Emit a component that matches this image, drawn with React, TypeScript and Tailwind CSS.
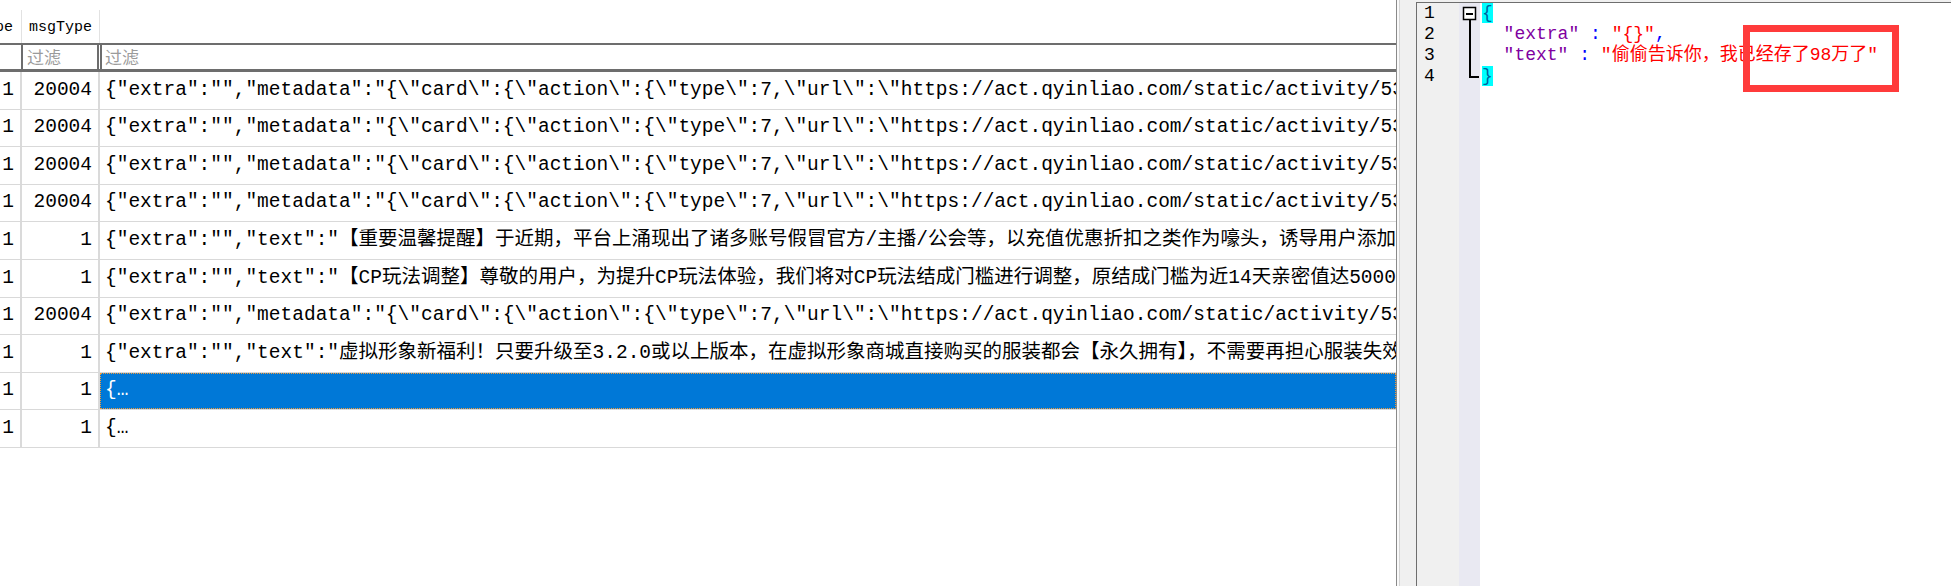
import React from 'react';

const MONO = { fontFamily: '"Liberation Mono", "Noto Sans CJK SC", monospace' };

const META =
  '{"extra":"","metadata":"{\\"card\\":{\\"action\\":{\\"type\\":7,\\"url\\":\\"https://act.qyinliao.com/static/activity/53e1f0a2b7c4/index.html\\"}}}"}';

interface Row {
  a: string;
  b: string;
  c: string;
  selected?: boolean;
}

const rows: Row[] = [
  { a: '1', b: '20004', c: META },
  { a: '1', b: '20004', c: META },
  { a: '1', b: '20004', c: META },
  { a: '1', b: '20004', c: META },
  {
    a: '1',
    b: '1',
    c: '{"extra":"","text":"【重要温馨提醒】于近期，平台上涌现出了诸多账号假冒官方/主播/公会等，以充值优惠折扣之类作为嚎头，诱导用户添加私人联系方式"}',
  },
  {
    a: '1',
    b: '1',
    c: '{"extra":"","text":"【CP玩法调整】尊敬的用户，为提升CP玩法体验，我们将对CP玩法结成门槛进行调整，原结成门槛为近14天亲密值达5000"}',
  },
  { a: '1', b: '20004', c: META },
  {
    a: '1',
    b: '1',
    c: '{"extra":"","text":"虚拟形象新福利！只要升级至3.2.0或以上版本，在虚拟形象商城直接购买的服装都会【永久拥有】，不需要再担心服装失效啦"}',
  },
  { a: '1', b: '1', c: '{…', selected: true },
  { a: '1', b: '1', c: '{…' },
];

const GridRow = ({ row }: { row: Row }) => (
  <div className="flex h-[37.6px] border-b border-[#d9d9d9] text-[19.5px] text-black" style={MONO}>
    <div className="flex w-[22px] shrink-0 items-center justify-end border-r-2 border-[#dadada] pr-[6px]">{row.a}</div>
    <div className="flex w-[78px] shrink-0 items-center justify-end border-r-2 border-[#dadada] pr-[6px]">{row.b}</div>
    <div
      className={
        row.selected
          ? 'flex min-w-0 flex-1 items-center overflow-hidden whitespace-nowrap border border-dotted border-[#f29a3a] bg-[#0078d7] pl-[4px] text-white'
          : 'flex min-w-0 flex-1 items-center overflow-hidden whitespace-nowrap pl-[5px]'
      }
    >
      {row.c}
    </div>
  </div>
);

const DataGrid = () => (
  <div className="flex h-full w-[1397px] shrink-0 flex-col border-r border-[#8a8a8a] bg-white">
    <div className="h-[10px]" />
    <div className="flex h-[33px] text-[15px] text-black" style={MONO}>
      <div className="flex w-[22px] shrink-0 items-center justify-end overflow-hidden border-r border-[#e2e2e2] pt-[3px] pr-[8px]">
        pe
      </div>
      <div className="flex w-[78px] shrink-0 items-center border-r border-[#e2e2e2] pt-[3px] pl-[7px]">msgType</div>
      <div className="flex-1" />
    </div>
    <div
      className="flex h-[29px] border-t-2 border-b-[3px] border-[#6d6d6d] text-[17px] text-[#9b9b9b]"
      style={{ fontFamily: '"Noto Sans CJK SC", sans-serif' }}
    >
      <div className="w-[21px] shrink-0" />
      <div className="flex w-[78px] shrink-0 items-center border-x-2 border-[#6d6d6d] pl-[4px]">过滤</div>
      <div className="ml-[1px] flex flex-1 items-center border-l-2 border-[#6d6d6d] pl-[3px]">过滤</div>
    </div>
    {rows.map((r, i) => (
      <GridRow key={i} row={r} />
    ))}
  </div>
);

const FoldMarks = () => (
  <svg width="21" height="90" viewBox="0 0 21 90" className="block">
    <rect x="4.5" y="4.5" width="12" height="12" fill="#fff" stroke="#000" strokeWidth="1.5" />
    <rect x="7" y="10" width="7" height="2" fill="#000" />
    <rect x="10" y="17" width="2" height="58" fill="#000" />
    <rect x="10" y="73" width="10" height="2" fill="#000" />
  </svg>
);

const Editor = () => (
  <div className="flex h-full flex-1 flex-col bg-[#f0f0f0]">
    <div className="h-[2px]" />
    <div className="flex flex-1 border-t border-l border-[#6e6e6e]">
      <div className="w-[42px] shrink-0 bg-[#f0f0f0] pl-[7px] text-[18px] leading-[21px] text-black" style={MONO}>
        <div>1</div>
        <div>2</div>
        <div>3</div>
        <div>4</div>
      </div>
      <div className="w-[21px] shrink-0 bg-[#e9e9f2]">
        <FoldMarks />
      </div>
      <div className="flex-1 bg-white pl-[2px] text-[18px] leading-[21px] whitespace-pre" style={MONO}>
        <div>
          <span className="bg-[#00ffff] text-[#0060a0]">{'{'}</span>
        </div>
        <div>
          {'  '}
          <span className="text-[#8000a0]">"extra"</span>
          <span className="text-[#0000ff]"> : </span>
          <span className="text-[#ff0000]">"{'{}'}"</span>
          <span className="text-[#0000ff]">,</span>
        </div>
        <div>
          {'  '}
          <span className="text-[#8000a0]">"text"</span>
          <span className="text-[#0000ff]"> : </span>
          <span className="text-[#ff0000]">"偷偷告诉你，我已经存了98万了"</span>
        </div>
        <div>
          <span className="bg-[#00ffff] text-[#0060a0]">{'}'}</span>
        </div>
      </div>
    </div>
  </div>
);

const App = () => {
  return (
    <div className="relative flex h-[586px] w-[1951px] overflow-hidden bg-white">
      <DataGrid />
      <div className="h-full w-[3px] shrink-0 border-r border-[#d4d4d4] bg-[#fafafa]" />
      <div className="h-full w-[16px] shrink-0 bg-[#f0f0f0]" />
      <Editor />
      <div className="pointer-events-none absolute left-[1743px] top-[25px] h-[67px] w-[156px] border-[7px] border-[#ff3b3b]" />
    </div>
  );
};

export default App;
